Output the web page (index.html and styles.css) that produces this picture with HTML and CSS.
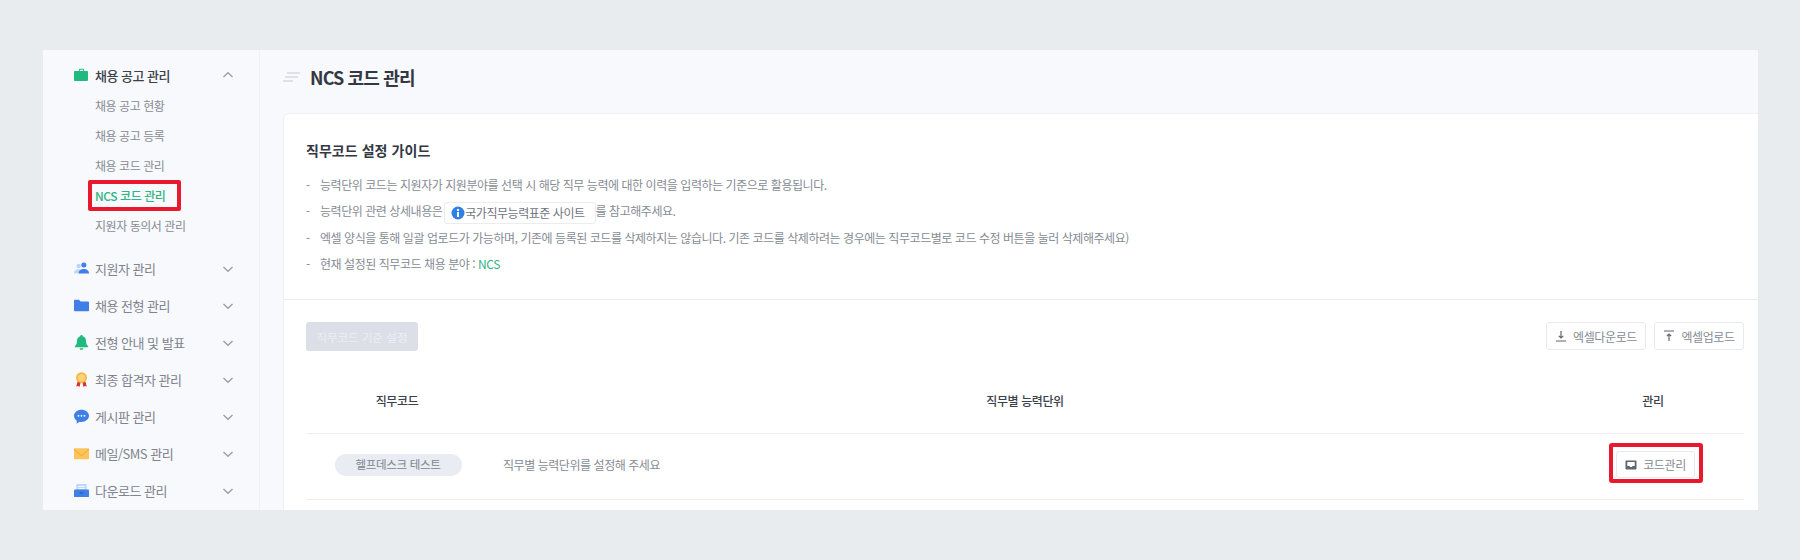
FILE: index.html
```html
<!DOCTYPE html>
<html lang="ko">
<head>
<meta charset="utf-8">
<title>NCS 코드 관리</title>
<link rel="stylesheet" href="styles.css">
</head>
<body>
<div class="frame">
  <aside class="sidebar">
    <div class="group">
      <div class="menu menu-open">
        <svg class="micon" viewBox="0 0 16 16"><path fill="#20b97e" d="M5.200 3.200V1.800c0-.5.4-.9.9-.9h3.800c.5 0 .9.4.9.9v1.400h3c.6 0 1.100.5 1.100 1.100v8.400c0 .6-.5 1.100-1.100 1.100H1.100c-.6 0-1.100-.5-1.100-1.100V4.300c0-.6.5-1.100 1.100-1.100zm1-1.300v1.300h3.600V1.900z"/></svg>
        <span class="menu-label">채용 공고 관리</span>
        <svg class="chev" viewBox="0 0 12 8"><path d="M1.500 6 6 1.800 10.500 6"/></svg>
      </div>
      <ul class="subs">
        <li>채용 공고 현황</li>
        <li>채용 공고 등록</li>
        <li>채용 코드 관리</li>
        <li class="sub-active">NCS 코드 관리</li>
        <li>지원자 동의서 관리</li>
      </ul>
    </div>
    <div class="menu">
      <svg class="micon" viewBox="0 0 16 16"><circle cx="5" cy="5.200" r="2.400" fill="#bcd4f8"/><path fill="#bcd4f8" d="M0 13c0-2.600 2-4.200 5-4.200s4 1.600 4 4.200z"/><circle cx="10.500" cy="4.300" r="2.700" fill="#3f7fe6"/><path fill="#3f7fe6" d="M5 13.300c0-2.800 2.300-4.700 5.500-4.700s5.500 1.900 5.500 4.700z"/></svg>
      <span class="menu-label">지원자 관리</span>
      <svg class="chev" viewBox="0 0 12 8"><path d="M1.500 2 6 6.200 10.500 2"/></svg>
    </div>
    <div class="menu">
      <svg class="micon" viewBox="0 0 16 16"><path fill="#3f7fe6" d="M0 2.800c0-.6.4-1 1-1h4.300l1.700 2h7.800c.7 0 1.200.5 1.200 1.200v8c0 .7-.5 1.200-1.200 1.200H1.200c-.7 0-1.200-.5-1.200-1.200z"/></svg>
      <span class="menu-label">채용 전형 관리</span>
      <svg class="chev" viewBox="0 0 12 8"><path d="M1.500 2 6 6.200 10.500 2"/></svg>
    </div>
    <div class="menu">
      <svg class="micon" viewBox="0 0 16 16"><path fill="#20b97e" d="M8 0c.8 0 1.300.6 1.300 1.300 2.400.6 3.500 2.500 3.500 5 0 2.900.8 4.300 2.200 5.500.4.400.2 1.200-.5 1.200H1.500c-.7 0-.9-.8-.5-1.200 1.400-1.200 2.200-2.600 2.200-5.500 0-2.500 1.100-4.400 3.500-5C6.700.6 7.200 0 8 0zM6 14h4c0 1-.9 1.800-2 1.800S6 15 6 14z"/></svg>
      <span class="menu-label">전형 안내 및 발표</span>
      <svg class="chev" viewBox="0 0 12 8"><path d="M1.500 2 6 6.200 10.500 2"/></svg>
    </div>
    <div class="menu">
      <svg class="micon" viewBox="0 0 16 16"><path fill="#d9312f" d="M3.800 10.500h3.400L6 15.800l-1.700-1-1.900.6zM8.800 10.500h3.400l1.400 4.900-1.900-.6-1.700 1z"/><circle cx="8" cy="6" r="5.800" fill="#f3b63c"/><circle cx="8" cy="6" r="4" fill="#fad27a"/></svg>
      <span class="menu-label">최종 합격자 관리</span>
      <svg class="chev" viewBox="0 0 12 8"><path d="M1.500 2 6 6.200 10.500 2"/></svg>
    </div>
    <div class="menu">
      <svg class="micon" viewBox="0 0 16 16"><path fill="#3f7fe6" d="M8 .8c4.400 0 8 2.800 8 6.500s-3.600 6.500-8 6.500c-.7 0-1.400-.1-2-.2L2.800 15.800l.2-3.200C1.100 11.400 0 9.500 0 7.300 0 3.600 3.600.8 8 .8z"/><circle cx="4.800" cy="7.300" r="1" fill="#fff"/><circle cx="8" cy="7.300" r="1" fill="#fff"/><circle cx="11.200" cy="7.300" r="1" fill="#fff"/></svg>
      <span class="menu-label">게시판 관리</span>
      <svg class="chev" viewBox="0 0 12 8"><path d="M1.500 2 6 6.200 10.500 2"/></svg>
    </div>
    <div class="menu">
      <svg class="micon" viewBox="0 0 16 16"><rect y="2.500" width="16" height="11.500" rx=".8" fill="#fbc55a"/><path fill="#f6a93a" d="M0 3 8 9.500 16 3v1.300L8 10.800 0 4.300z"/></svg>
      <span class="menu-label">메일/SMS 관리</span>
      <svg class="chev" viewBox="0 0 12 8"><path d="M1.500 2 6 6.200 10.500 2"/></svg>
    </div>
    <div class="menu">
      <svg class="micon" viewBox="0 0 16 16"><rect x="2.500" y="1" width="11" height="7" rx=".8" fill="#bcd4f8"/><rect x="4.500" y="3" width="7" height="1" fill="#fff"/><rect x="4.500" y="5.200" width="7" height="1" fill="#fff"/><path fill="#3f7fe6" d="M0 8c0-.6.4-1 1-1h14c.6 0 1 .4 1 1v6c0 .6-.4 1-1 1H1c-.6 0-1-.4-1-1z"/><rect x="6" y="10" width="4" height="1.200" fill="#1f57b8"/></svg>
      <span class="menu-label">다운로드 관리</span>
      <svg class="chev" viewBox="0 0 12 8"><path d="M1.500 2 6 6.200 10.500 2"/></svg>
    </div>
  </aside>

  <main class="main">
    <header class="page-head">
      <svg class="head-icon" viewBox="0 0 17 10"><path d="M4 1h13M2 5h13M0 9h10"/></svg>
      <h1>NCS 코드 관리</h1>
    </header>
    <section class="card">
      <div class="guide">
        <h2>직무코드 설정 가이드</h2>
        <ul class="guide-list">
          <li>능력단위 코드는 지원자가 지원분야를 선택 시 해당 직무 능력에 대한 이력을 입력하는 기준으로 활용됩니다.</li>
          <li>능력단위 관련 상세내용은 <span class="link-chip"><svg class="info" viewBox="0 0 14 14"><circle cx="7" cy="7" r="6.500" fill="#2f80e4"/><rect x="6" y="6" width="2" height="5" fill="#fff"/><rect x="6" y="3" width="2" height="2" fill="#fff"/></svg>국가직무능력표준 사이트</span> 를 참고해주세요.</li>
          <li>엑셀 양식을 통해 일괄 업로드가 가능하며, 기존에 등록된 코드를 삭제하지는 않습니다. 기존 코드를 삭제하려는 경우에는 직무코드별로 코드 수정 버튼을 눌러 삭제해주세요)</li>
          <li>현재 설정된 직무코드 채용 분야 : <span class="green">NCS</span></li>
        </ul>
      </div>
      <div class="codes">
        <div class="toolbar">
          <button class="btn-disabled">직무코드 기준 설정</button>
          <div class="tool-right">
            <button class="btn btn-dl"><svg class="bicon" viewBox="0 0 12 12"><path d="M6 1v7M3.800 5.800 6 8l2.200-2.200M1 11h10"/></svg>엑셀다운로드</button>
            <button class="btn btn-ul"><svg class="bicon" viewBox="0 0 12 12"><path d="M1 1h10M6 11V4M3.800 6.200 6 4l2.200 2.200"/></svg>엑셀업로드</button>
          </div>
        </div>
        <div class="row row-head">
          <div class="col-code">직무코드</div>
          <div class="col-unit col-unit-head">직무별 능력단위</div>
          <div class="col-manage">관리</div>
        </div>
        <div class="row row-body">
          <div class="col-code"><span class="pill">헬프데스크 테스트</span></div>
          <div class="col-unit">직무별 능력단위를 설정해 주세요</div>
          <div class="col-manage">
            <button class="btn btn-code"><svg class="bicon-fill" viewBox="0 0 12 12"><path fill="#5f6673" d="M1.500 1.500h9c.6 0 1 .4 1 1v7c0 .6-.4 1-1 1h-9c-.6 0-1-.4-1-1v-7c0-.6.4-1 1-1z"/><path fill="#fff" d="M2.300 3h7.400v4H7.500L6.800 8H5.200l-.7-1H2.300z"/></svg>코드관리</button>
          </div>
        </div>
      </div>
    </section>
  </main>
</div>
</body>
</html>
```

FILE: styles.css
```css
*, *::before, *::after { box-sizing: border-box; }
html, body { margin: 0; height: 100%; }
body {
  background: #e9ecef;
  padding: 50px 42px 50px 43px;
  font-family: "Noto Sans CJK KR", "Noto Sans", sans-serif;
  color: #868b94;
  font-size: 12px;
}
button { font: inherit; cursor: pointer; }
ul { list-style: none; margin: 0; padding: 0; }

.frame {
  display: flex;
  height: 460px;
  background: #f8f9fc;
  overflow: hidden;
}

/* sidebar */
.sidebar {
  flex: none;
  width: 217px;
  border-right: 1px solid #eff1f5;
  padding: 12px 0 0 31px;
}
.menu {
  display: flex;
  align-items: center;
  height: 37px;
  font-size: 13px;
  letter-spacing: -0.5px;
  color: #7e838d;
}
.menu-open { height: 26px; color: #3b404a; font-weight: 500; }
.micon { flex: none; width: 15px; height: 15px; margin-right: 6px; }
.menu-label { flex: 1; }
.chev {
  flex: none;
  width: 12px;
  height: 8px;
  margin-right: 25px;
  fill: none;
  stroke: #9a9fa8;
  stroke-width: 1.400;
}
.group { margin-bottom: 9px; }
.subs { padding: 3px 0 0 21px; }
.subs li { height: 30px; line-height: 30px; letter-spacing: -0.45px; color: #868b94; }
.subs .sub-active {
  position: relative;
  color: #2fb583;
  font-weight: 500;
}
.sub-active::after {
  content: "";
  position: absolute;
  left: -7px;
  top: -1px;
  width: 93px;
  height: 31px;
  border: 4px solid #e8192c;
  border-radius: 2px;
}

/* main */
.main { flex: 1; min-width: 0; padding-left: 23px; }
.page-head { display: flex; align-items: center; height: 63px; padding-bottom: 9px; }
.head-icon {
  width: 17px;
  height: 10px;
  margin-right: 10px;
  fill: none;
  stroke: #c5c9d0;
  stroke-width: 1.200;
}
h1 { margin: 0; font-size: 18px; font-weight: 700; color: #333842; letter-spacing: -0.85px; }

.card {
  width: calc(100% + 9px);
  background: #fff;
  border: 1px solid #eef0f4;
  border-radius: 6px 6px 0 0;
  height: 420px;
}
.guide { padding: 26px 22px 16px; height: 186px; border-bottom: 1px solid #eaecf0; }
h2 { margin: 0 0 12px; font-size: 14px; line-height: 20px; font-weight: 700; color: #333842; letter-spacing: 0.05px; }
.guide-list li {
  position: relative;
  padding-left: 14px;
  height: 26.300px;
  line-height: 26px;
  letter-spacing: -0.45px;
  white-space: nowrap;
}
.guide-list li::before { content: "-"; position: absolute; left: 0; top: 0; }
.green { color: #2fb583; }
.link-chip {
  display: inline-flex;
  align-items: center;
  height: 22px;
  margin: 0 -3px 0 -1px;
  padding: 0 10px 0 6px;
  line-height: 20px;
  border: 1px solid #eaecf0;
  border-radius: 3px;
  color: #6f747e;
  vertical-align: middle;
}
.info { width: 14px; height: 14px; margin-right: 0; }

.codes { padding: 0 22px; }
.toolbar { display: flex; justify-content: space-between; padding-top: 22px; }
.btn-disabled {
  width: 112px;
  height: 29px;
  padding: 0;
  border: 0;
  border-radius: 3px;
  background: #dcdfe8;
  color: #eceef3;
  font-size: 11.500px;
}
.tool-right { display: flex; gap: 8px; }
.btn {
  display: inline-flex;
  align-items: center;
  justify-content: center;
  height: 28px;
  padding: 0;
  border: 1px solid #e6e9ee;
  border-radius: 3px;
  background: #fff;
  color: #868b94;
  font-size: 12px;
  letter-spacing: -0.4px;
}
.btn-dl { width: 100px; }
.btn-ul { width: 90px; }
.btn-code { width: 79px; height: 27px; margin-left: 5px; }
.bicon {
  width: 12px;
  height: 12px;
  margin-right: 6px;
  fill: none;
  stroke: #5f6673;
  stroke-width: 1.200;
}
.bicon-fill { width: 12px; height: 12px; margin-right: 6px; }

.row { display: grid; grid-template-columns: 182px 1fr 182px; align-items: center; border-bottom: 1px solid #eceef2; }
.row-head { height: 83px; padding-top: 16px; color: #3b404a; font-weight: 500; text-align: center; letter-spacing: -0.4px; }
.row-body { height: 66px; padding-bottom: 4px; }
.col-code { text-align: center; }
.col-unit { padding-left: 15px; letter-spacing: -0.45px; }
.col-unit-head { padding-left: 0; letter-spacing: -0.4px; }
.col-manage { display: flex; justify-content: center; position: relative; }
.row-body .col-manage::after {
  content: "";
  position: absolute;
  left: 47px;
  top: -8px;
  width: 94px;
  height: 40px;
  border: 4px solid #e8192c;
  border-radius: 3px;
}
.pill {
  display: inline-block;
  width: 127px;
  height: 22px;
  margin-left: 2px;
  line-height: 21px;
  border-radius: 11px;
  background: #e9ecf2;
  color: #7e838d;
  font-size: 11.500px;
  letter-spacing: -0.3px;
  text-align: center;
}
```
